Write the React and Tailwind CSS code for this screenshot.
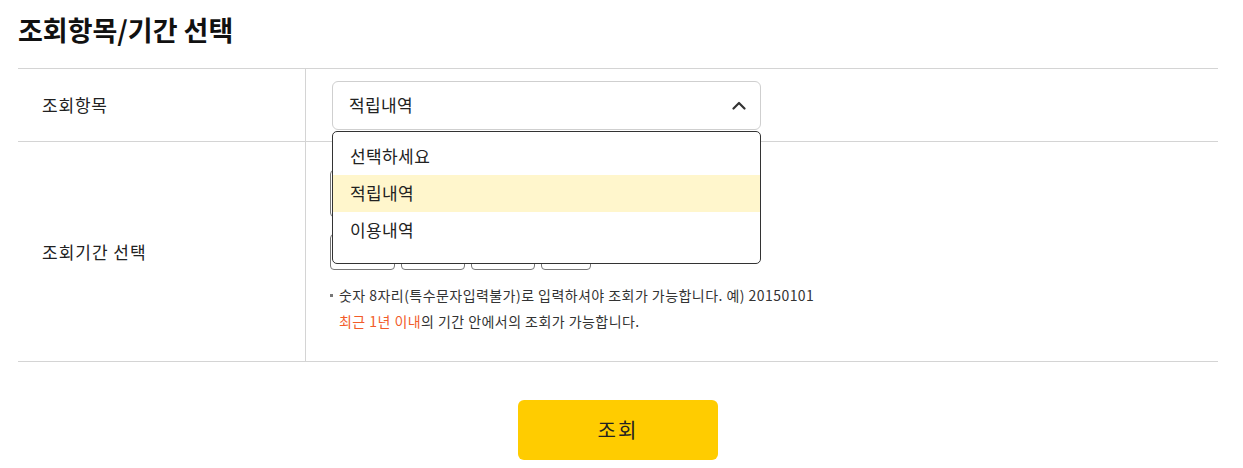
import React, { useState } from "react";

const OPTIONS = ["선택하세요", "적립내역", "이용내역"];
const PERIODS = [
  { label: "1개월", w: "w-[65px]" },
  { label: "3개월", w: "w-[64px]" },
  { label: "6개월", w: "w-[64px]" },
  { label: "1년", w: "w-[50px]" },
];

function ChevronUp() {
  return (
    <svg width="14" height="9" viewBox="0 0 14 9" fill="none">
      <path d="M1.5 7.5L7 2L12.5 7.5" stroke="#333" strokeWidth="2.2" strokeLinecap="round" strokeLinejoin="round" />
    </svg>
  );
}

export default function App() {
  const [selected, setSelected] = useState("적립내역");
  const [open, setOpen] = useState(true);

  return (
    <div className="w-[1243px] h-[468px] bg-white px-[18px] text-[#222] font-['Noto_Sans_CJK_KR','Noto_Sans',sans-serif] overflow-hidden">
      <h2 className="pt-[12px] text-[27px] font-bold leading-[36px] tracking-[0px] text-[#111]">
        조회항목/기간 선택
      </h2>

      <div className="mt-[20px] w-[1200px] border-t border-[#d4d4d4]">
        {/* row 1 */}
        <div className="grid grid-cols-[288px_1fr] border-b border-[#d4d4d4]">
          <div className="flex items-center h-[72px] pl-6 border-r border-[#d4d4d4] text-[17px] tracking-[0.8px]">
            조회항목
          </div>
          <div className="flex items-center pl-[26px]">
            <div className="relative w-[429px]">
              <button
                onClick={() => setOpen(!open)}
                className="w-full h-[49px] flex items-center justify-between pl-4 pr-[14px] border border-[#cfcfcf] rounded-[6px] text-[17px] tracking-[0.4px] text-[#222] bg-white"
              >
                <span>{selected}</span>
                <ChevronUp />
              </button>
              {open && (
                <ul className="absolute left-0 top-[50px] z-10 w-[429px] h-[133px] pt-[6px] bg-white border border-[#333] rounded-[5px]">
                  {OPTIONS.map((opt) => (
                    <li
                      key={opt}
                      onClick={() => {
                        setSelected(opt);
                        setOpen(false);
                      }}
                      className={`h-[37px] flex items-center pl-[17px] text-[17px] tracking-[0.4px] text-[#222] ${
                        opt === selected ? "bg-[#fff6cc]" : ""
                      }`}
                    >
                      {opt}
                    </li>
                  ))}
                </ul>
              )}
            </div>
          </div>
        </div>

        {/* row 2 */}
        <div className="grid grid-cols-[288px_1fr] border-b border-[#d4d4d4]">
          <div className="flex items-center pl-6 border-r border-[#d4d4d4] text-[17px] tracking-[1px]">
            조회기간 선택
          </div>
          <div className="pl-6 pt-[28px] pb-[27px]">
            <div className="flex items-center gap-2">
              <input className="w-[180px] h-[47px] border border-[#777] rounded-[4px] px-3 text-[15px]" defaultValue="20240101" />
              <span className="text-[15px]">~</span>
              <input className="w-[180px] h-[47px] border border-[#777] rounded-[4px] px-3 text-[15px]" defaultValue="20241231" />
            </div>
            <div className="mt-[17px] flex gap-[6px]">
              {PERIODS.map((p) => (
                <button
                  key={p.label}
                  className={`${p.w} h-[36px] border border-[#777] rounded-[4px] text-[14px] text-[#333]`}
                >
                  {p.label}
                </button>
              ))}
            </div>
            <div className="mt-[12px] text-[14px] leading-[26px] tracking-[0.45px] text-[#333]">
              <div className="flex items-center">
                <span className="w-[3px] h-[3px] bg-[#777] mr-[6px]" />
                <span>숫자 8자리(특수문자입력불가)로 입력하셔야 조회가 가능합니다. 예) 20150101</span>
              </div>
              <div className="pl-[9px]">
                <span className="text-[#f25c2a]">최근 1년 이내</span>의 기간 안에서의 조회가 가능합니다.
              </div>
            </div>
          </div>
        </div>
      </div>

      <div className="w-[1200px] mt-[38px] flex justify-center">
        <button className="w-[200px] h-[60px] rounded-[6px] bg-[#ffcc00] text-[20px] tracking-[2px] text-[#222]">
          조회
        </button>
      </div>
    </div>
  );
}
